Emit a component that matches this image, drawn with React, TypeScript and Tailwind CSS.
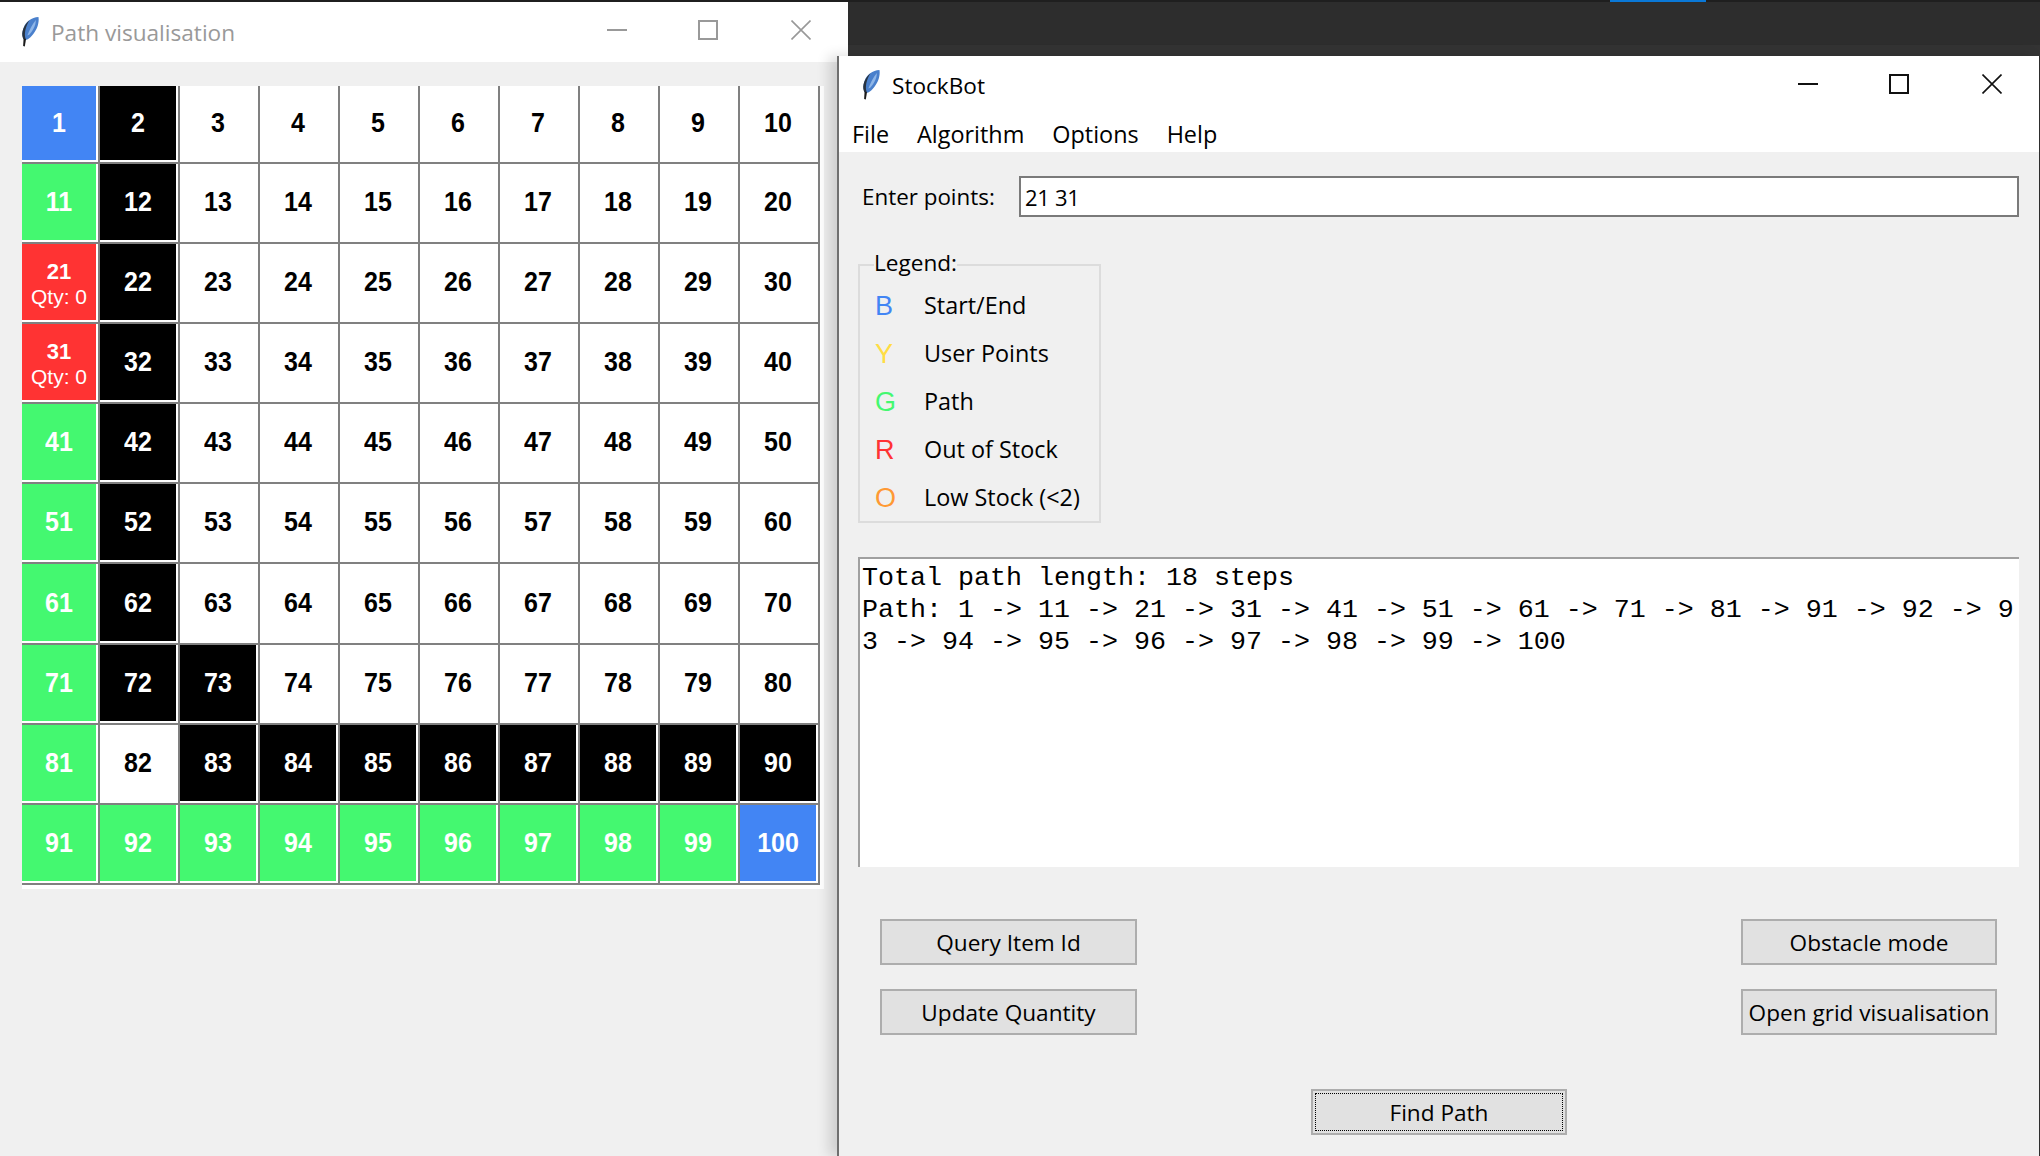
const UI_FONT = "font-['Open_Sans',sans-serif]";

const BLUE = [1, 100];
const GREEN = [11, 41, 51, 61, 71, 81, 91, 92, 93, 94, 95, 96, 97, 98, 99];
const RED = [21, 31];
const BLACK = [2, 12, 22, 32, 42, 52, 62, 72, 73, 83, 84, 85, 86, 87, 88, 89, 90];

const LEGEND = [
  { letter: "B", label: "Start/End", color: "text-[#4285f4]" },
  { letter: "Y", label: "User Points", color: "text-[#ffdd44]" },
  { letter: "G", label: "Path", color: "text-[#44f870]" },
  { letter: "R", label: "Out of Stock", color: "text-[#ff3333]" },
  { letter: "O", label: "Low Stock (<2)", color: "text-[#ff9933]" },
];

function cellColor(n: number) {
  if (BLUE.includes(n)) return "bg-[#4285f4] text-white";
  if (GREEN.includes(n)) return "bg-[#44f870] text-white";
  if (RED.includes(n)) return "bg-[#ff3333] text-white";
  if (BLACK.includes(n)) return "bg-black text-white";
  return "bg-white text-black";
}

function Feather({ className }: { className: string }) {
  return (
    <svg className={className} viewBox="0 0 17 32" preserveAspectRatio="none" aria-hidden="true">
      <path d="M16.5 1C10 1.5 4.5 5.5 2.5 12C1 16 1 20 2.5 24L5.5 24.5C10 22 14 16 15.8 10C16.6 7 17 4 16.5 1Z" fill="#4a80cc" />
      <path d="M14 4C11 8 8 14 6 20L8 19C11 15 14 10 14 4Z" fill="#8fb6e8" />
      <path d="M8 4.5C4.5 7.5 2.2 12 1.4 16C0.8 19 1.2 22 2.5 24L4.2 23C3 19 4 11 8 4.5Z" fill="#28323f" />
      <path d="M2.5 23L4.8 23.5L3.6 31.5L2 31Z" fill="#1a1a1a" />
    </svg>
  );
}

function WindowControls({ stroke, className }: { stroke: string; className: string }) {
  return (
    <div className={`flex items-center ${className}`}>
      <svg width="20" height="20" viewBox="0 0 20 20" fill="none" stroke={stroke} strokeWidth="2">
        <path d="M0 10H20" />
      </svg>
      <svg className="ml-[71px]" width="20" height="20" viewBox="0 0 20 20" fill="none" stroke={stroke} strokeWidth="2">
        <path d="M1 1H19V19H1Z" />
      </svg>
      <svg className="ml-[73px]" width="20" height="20" viewBox="0 0 20 20" fill="none" stroke={stroke} strokeWidth="1.6">
        <path d="M0.5 0.5L19.5 19.5M19.5 0.5L0.5 19.5" />
      </svg>
    </div>
  );
}

function Cell({ n }: { n: number }) {
  const isRed = RED.includes(n);
  return (
    <div className="border-r-2 border-b-2 border-[#808080] bg-white pr-[2px] pb-[2px]">
      <div className={`flex h-full w-full flex-col items-center justify-center ${cellColor(n)}`}>
        {isRed ? (
          <>
            <span className="pt-[4px] text-[22px] leading-[26px] font-bold">{n}</span>
            <span className="text-[21px] leading-[24px]">Qty: 0</span>
          </>
        ) : (
          <span className="-mt-[1px] inline-block scale-y-[1.1] text-[25px] leading-none font-bold">{n}</span>
        )}
      </div>
    </div>
  );
}

function PathWindow() {
  const numbers = Array.from({ length: 100 }, (_, i) => i + 1);
  return (
    <div className="absolute top-[2px] left-0 h-[1154px] w-[848px] bg-[#f0f0f0]">
      <div className="flex h-[60px] items-center justify-between bg-white pr-[37px] pl-[21px]">
        <div className="flex items-center gap-[12px]">
          <Feather className="h-[31px] w-[18px]" />
          <span className={`${UI_FONT} pt-[1px] text-[22.6px] text-[#999999]`}>Path visualisation</span>
        </div>
        <WindowControls stroke="#999999" className="-mt-[4px]" />
      </div>
      <div className="mt-[24px] ml-[22px] w-[802px] bg-white pr-[4px] pb-[4px]">
        <div className="grid grid-cols-[78px_repeat(9,80px)] grid-rows-[78px_80px_80px_80px_80px_80px_81px_80px_80px_80px]">
          {numbers.map((n) => (
            <Cell key={n} n={n} />
          ))}
        </div>
      </div>
    </div>
  );
}

function TkButton({ label, width, focused }: { label: string; width: string; focused?: boolean }) {
  return (
    <button
      type="button"
      className={`${UI_FONT} ${width} flex h-[46px] items-center justify-center border-2 border-[#adadad] bg-[#e1e1e1] pt-[1px] text-[22.6px] whitespace-nowrap text-black`}
    >
      {focused ? (
        <span className="-mt-[1px] flex h-[38px] w-[248px] items-center justify-center border border-dotted border-black pt-[1px]">
          {label}
        </span>
      ) : (
        label
      )}
    </button>
  );
}

function StockBotWindow() {
  return (
    <div className="absolute top-[56px] left-[837px] flex h-[1100px] w-[1203px] flex-col border-l-2 border-[#6f6f6f] bg-[#f0f0f0] shadow-[-8px_0_12px_rgba(0,0,0,0.14)]">
      <div className="border-r border-[#2d2d2d] bg-white">
        <div className="flex h-[58px] items-center justify-between pr-[37px] pl-[23px]">
          <div className="flex items-center gap-[12px]">
            <Feather className="h-[31px] w-[18px]" />
            <span className={`${UI_FONT} pt-[1px] text-[22.6px] text-black`}>StockBot</span>
          </div>
          <WindowControls stroke="#111111" className="-mt-[2px]" />
        </div>
        <div className={`${UI_FONT} flex h-[38px] items-center gap-[28px] pt-[4px] pl-[13px] text-[23.4px] text-black`}>
          <span>File</span>
          <span>Algorithm</span>
          <span>Options</span>
          <span>Help</span>
        </div>
      </div>

      <div className="flex-1 border-r border-[#2d2d2d] pt-[24px] pr-[19px] pl-[19px]">
        <div className="flex items-center pr-[1px]">
          <span className={`${UI_FONT} w-[161px] pt-[1px] pl-[4px] text-[22.4px] text-black`}>Enter points:</span>
          <div className={`${UI_FONT} flex h-[41px] flex-1 items-center border-2 border-[#7a7a7a] bg-white pt-[1px] pl-[4px] text-[22px] tracking-[-0.3px] text-black`}>
            21 31
          </div>
        </div>

        <div className="relative mt-[47px] h-[259px] w-[243px] border-2 border-[#dcdcdc] pt-[16px]">
          <span className={`${UI_FONT} absolute -top-[18px] left-[14px] bg-[#f0f0f0] text-[22.6px] leading-[30px] text-black`}>
            Legend:
          </span>
          {LEGEND.map((item) => (
            <div key={item.letter} className="flex h-[48px] items-center pl-[15px]">
              <span className={`w-[49px] text-[27px] ${item.color}`}>{item.letter}</span>
              <span className={`${UI_FONT} text-[23.4px] whitespace-nowrap text-black`}>{item.label}</span>
            </div>
          ))}
        </div>

        <div className="mt-[34px] mr-[1px] h-[310px] overflow-hidden border-t-2 border-l-2 border-[#a0a0a0] bg-white pt-[3px] pl-[2px]">
          <pre className="font-['Liberation_Mono',monospace] text-[26.67px] leading-[32px] text-black">
            {"Total path length: 18 steps\nPath: 1 -> 11 -> 21 -> 31 -> 41 -> 51 -> 61 -> 71 -> 81 -> 91 -> 92 -> 9\n3 -> 94 -> 95 -> 96 -> 97 -> 98 -> 99 -> 100"}
          </pre>
        </div>

        <div className="mt-[52px] mr-[1px] flex justify-between px-[22px]">
          <TkButton label="Query Item Id" width="w-[257px]" />
          <TkButton label="Obstacle mode" width="w-[256px]" />
        </div>
        <div className="mt-[24px] mr-[1px] flex justify-between px-[22px]">
          <TkButton label="Update Quantity" width="w-[257px]" />
          <TkButton label="Open grid visualisation" width="w-[256px]" />
        </div>
        <div className="mt-[54px] flex justify-center">
          <TkButton label="Find Path" width="w-[256px]" focused />
        </div>
      </div>
    </div>
  );
}

export default function App() {
  return (
    <div className="relative h-[1156px] w-[2040px] overflow-hidden bg-[#2d2d2d] font-['Liberation_Sans',Arial,sans-serif]">
      <div className="h-[2px] bg-[#1f1f1f]">
        <div className="ml-[1610px] h-[2px] w-[96px] bg-[#0a78d7]" />
      </div>
      <div className="mt-[43px] h-[11px] bg-[#333333]" />
      <PathWindow />
      <StockBotWindow />
    </div>
  );
}
